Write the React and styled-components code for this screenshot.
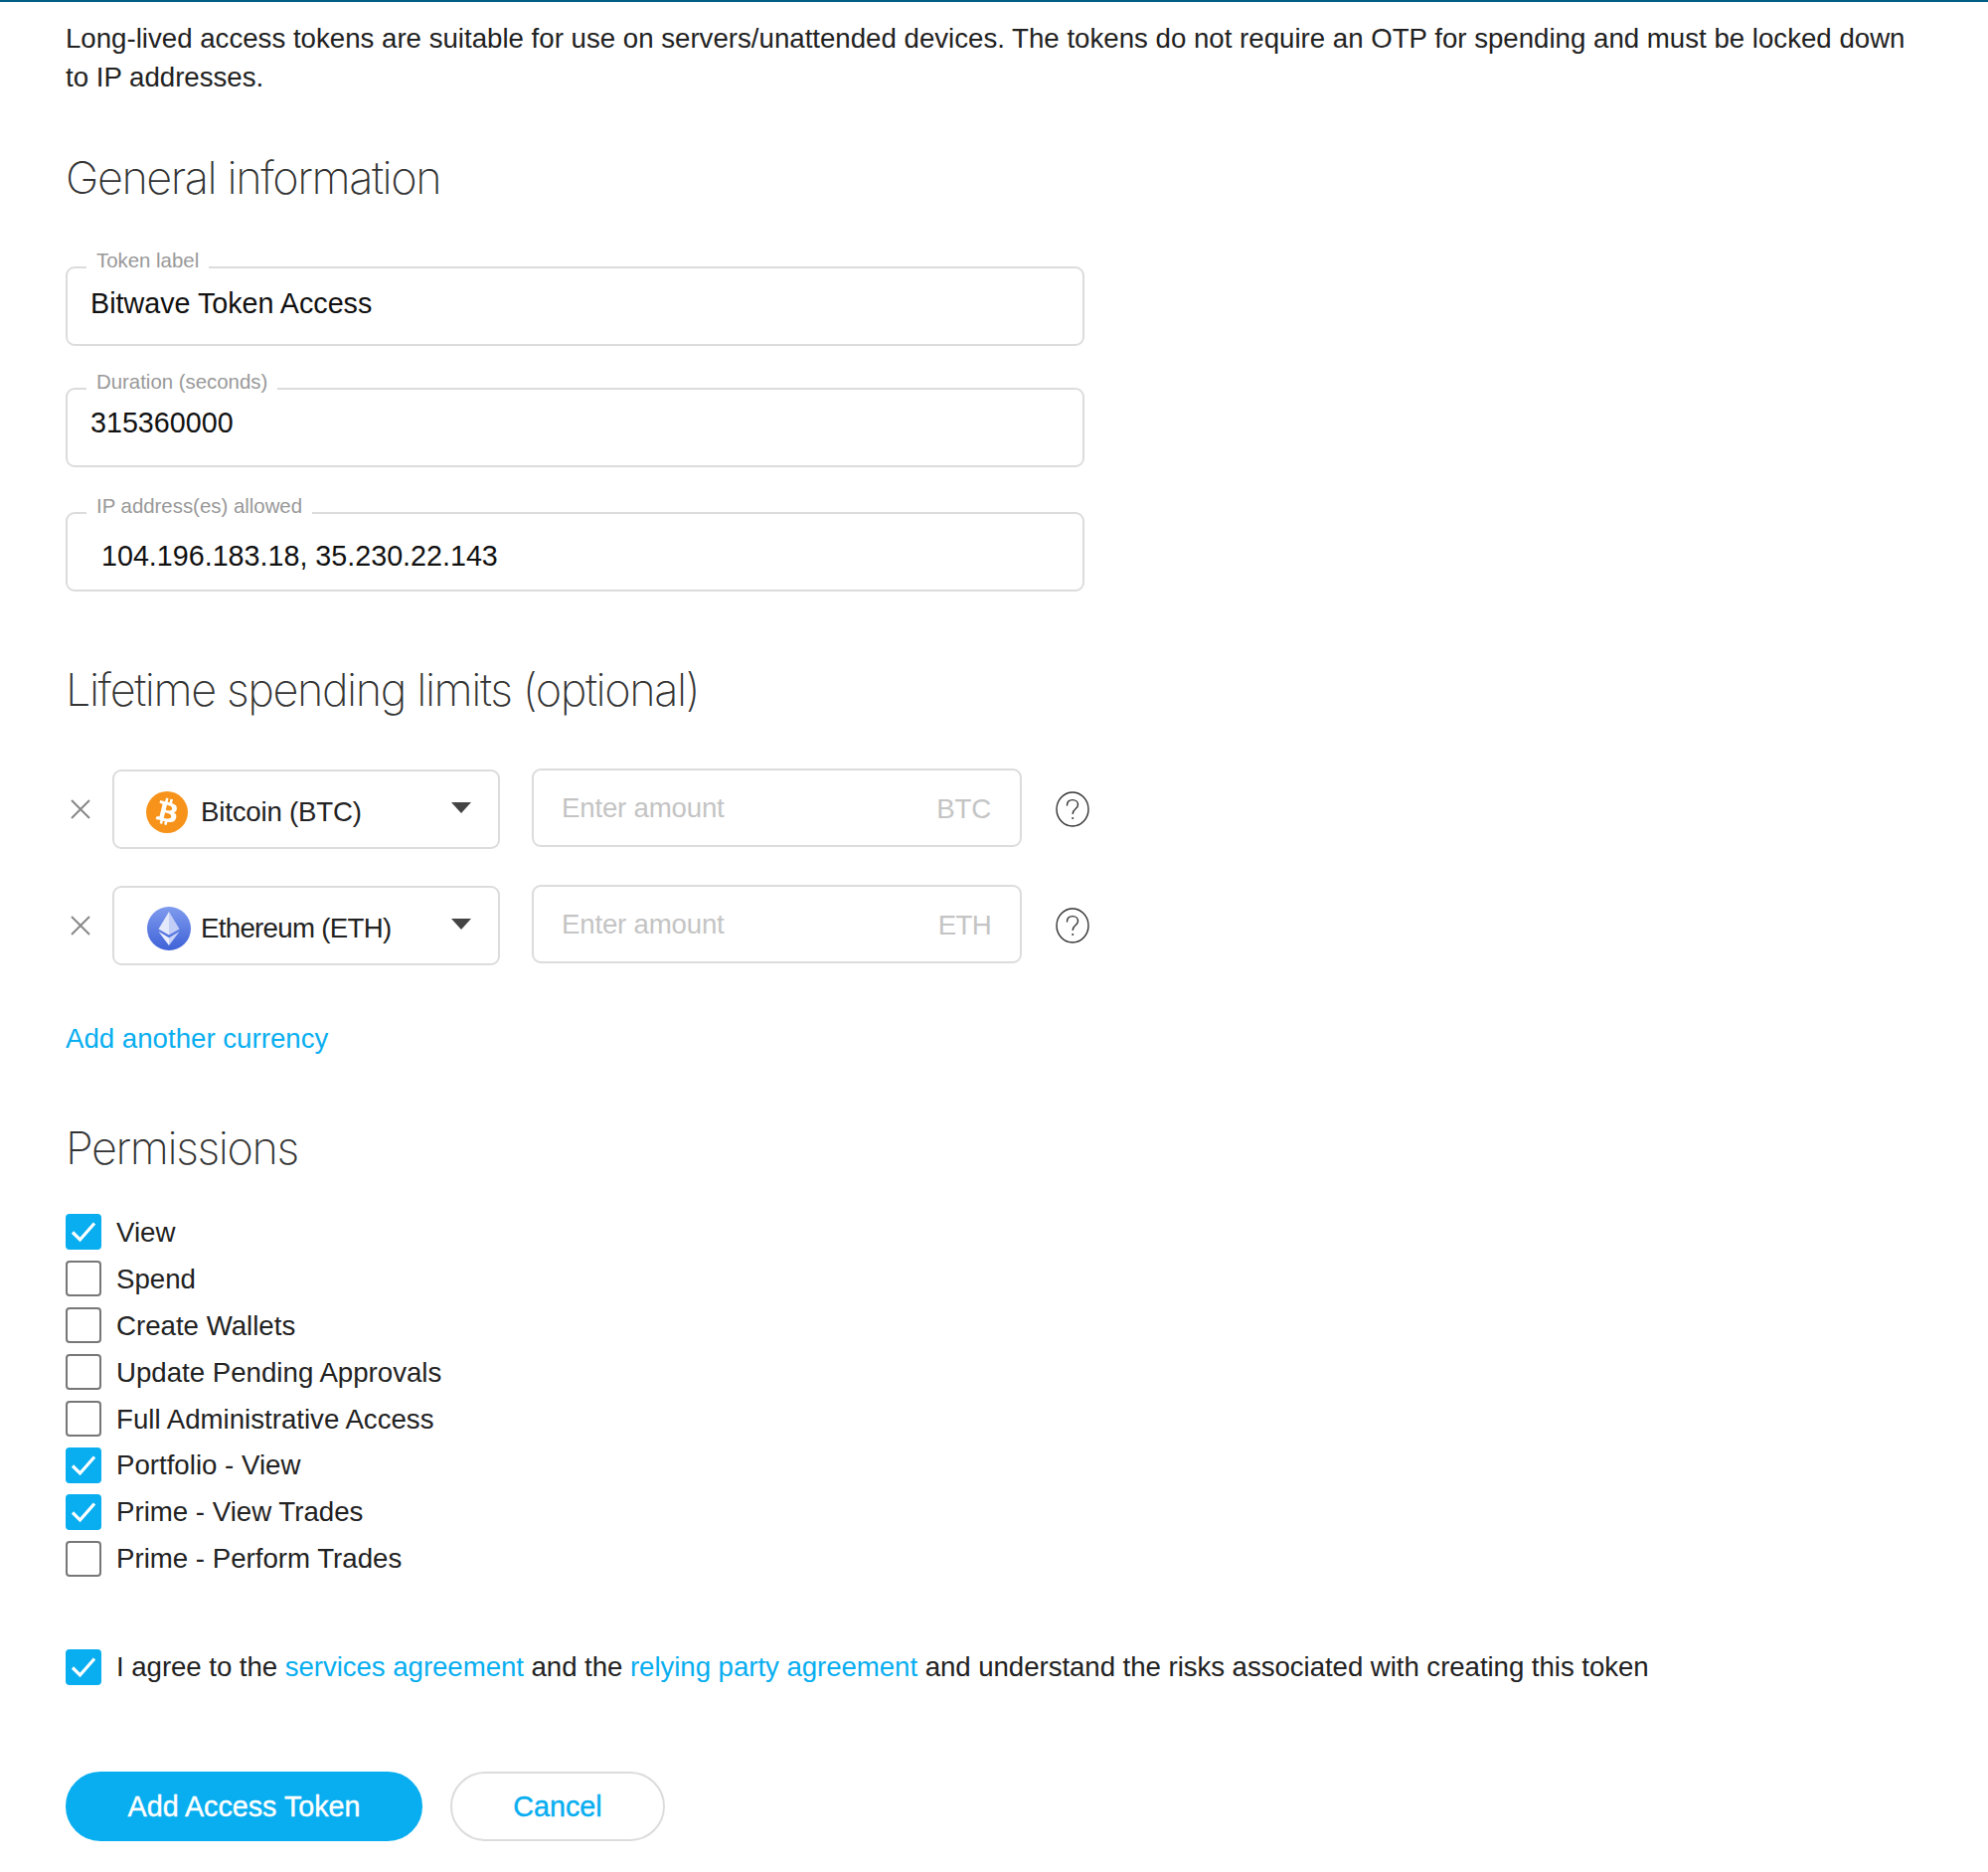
import React from 'react';
import styled, { createGlobalStyle } from 'styled-components';
import { FaBtc } from 'react-icons/fa';

const blue = '#08aef0';
const line = '#dcdcdc';

const GlobalStyle = createGlobalStyle`
  html, body {
    margin: 0;
    background: #fff;
  }
  body {
    font-family: "Liberation Sans", Arial, sans-serif;
    color: #222;
  }
`;

const TopBar = styled.div`
  height: 2px;
  background: #005f86;
`;

const Page = styled.main`
  padding: 17px 66px 32px;
  font-size: 27.65px;
  line-height: 39px;
`;

const Intro = styled.p`
  margin: 0;
`;

const Heading = styled.h2`
  margin: ${props => props.top}px 0 0;
  font-family: Inter, "Liberation Sans", sans-serif;
  font-weight: 200;
  font-size: 45px;
  line-height: 60px;
  letter-spacing: -1.42px;
  color: #333;
`;

const Fieldset = styled.fieldset`
  box-sizing: border-box;
  width: 1025px;
  height: 98px;
  margin: ${props => props.top}px 0 0;
  padding: 0;
  min-width: 0;
  border: 2px solid ${line};
  border-radius: 9px;
`;

const Legend = styled.legend`
  margin-left: 19px;
  padding: 0 10px 14px;
  font-size: 20.4px;
  line-height: 24px;
  color: #999;
`;

const FieldInput = styled.input`
  box-sizing: border-box;
  display: block;
  width: 100%;
  height: 36px;
  margin-top: ${props => props.offset}px;
  padding: 0 20px 0 ${props => props.padLeft}px;
  border: 0;
  outline: 0;
  background: transparent;
  font: inherit;
  font-size: 28.7px;
  color: #111;
`;

const LimitRows = styled.div`
  display: flex;
  flex-direction: column;
  gap: 38px;
  margin-top: 49px;
`;

const LimitRow = styled.div`
  display: flex;
  align-items: center;
  height: 79px;
`;

const Remove = styled.button`
  display: flex;
  width: 47px;
  margin-top: 2px;
  padding: 0 0 0 5px;
  border: 0;
  background: none;
  color: #888;
`;

const CurrencySelect = styled.button`
  box-sizing: border-box;
  display: flex;
  align-items: center;
  width: 390px;
  height: 80px;
  margin-top: 3px;
  padding: 5px 27px 0 32px;
  border: 2px solid ${line};
  border-radius: 9px;
  background: #fff;
  font: inherit;
  color: #222;
`;

const CurrencyName = styled.span`
  letter-spacing: ${props => props.spacing}px;
`;

const CoinBadge = styled.span`
  flex: none;
  display: flex;
  align-items: center;
  justify-content: center;
  width: 42px;
  height: 42px;
  margin-right: 13px;
  border-radius: 50%;
  background: #f7931a;
  color: #fff;
  font-size: 27px;

  svg {
    transform: rotate(14deg);
  }
`;

const Caret = styled.span`
  margin: 0 0 9px auto;
  border-top: 11px solid #444;
  border-left: 10px solid transparent;
  border-right: 10px solid transparent;
`;

const AmountBox = styled.label`
  box-sizing: border-box;
  display: flex;
  align-items: center;
  width: 493px;
  height: 79px;
  margin-left: 32px;
  padding: 0 29px 0 28px;
  border: 2px solid ${line};
  border-radius: 9px;
`;

const AmountInput = styled.input`
  flex: 1;
  min-width: 0;
  padding: 0;
  border: 0;
  outline: 0;
  font: inherit;
  letter-spacing: -0.2px;
  &::placeholder {
    color: #c4c4c4;
    opacity: 1;
  }
`;

const Unit = styled.span`
  padding-top: 2px;
  color: #c4c4c4;
  letter-spacing: ${props => props.spacing}px;
`;

const Help = styled.span`
  display: flex;
  margin: 2px 0 0 34px;
  color: #333;
`;

const TextLink = styled.a`
  color: ${blue};
  text-decoration: none;
`;

const AddCurrency = styled(TextLink)`
  display: block;
  margin-top: 56px;
`;

const PermissionList = styled.div`
  margin-top: 31px;
`;

const CheckRow = styled.label`
  display: flex;
  align-items: center;
  height: 46.9px;
  margin-top: ${props => props.top || 0}px;
`;

const Agreement = styled.span`
  letter-spacing: -0.057px;
`;

const Box = styled.span`
  box-sizing: border-box;
  flex: none;
  display: flex;
  align-items: center;
  justify-content: center;
  width: 36px;
  height: 36px;
  margin-right: 15px;
  border: 2px solid ${props => (props.checked ? blue : '#777')};
  border-radius: 4px;
  background: ${props => (props.checked ? blue : '#fff')};
`;

const Actions = styled.div`
  display: flex;
  gap: 28px;
  margin-top: 82px;
`;

const Button = styled.button`
  box-sizing: border-box;
  height: 70px;
  width: ${props => props.width}px;
  padding: 0;
  border: 2px solid ${props => (props.primary ? blue : line)};
  border-radius: 35px;
  background: ${props => (props.primary ? blue : '#fff')};
  color: ${props => (props.primary ? '#fff' : blue)};
  font: inherit;
  font-size: 28.7px;
  -webkit-text-stroke: 0.4px currentColor;
`;

const permissions = [
  ['View', true],
  ['Spend', false],
  ['Create Wallets', false],
  ['Update Pending Approvals', false],
  ['Full Administrative Access', false],
  ['Portfolio - View', true],
  ['Prime - View Trades', true],
  ['Prime - Perform Trades', false],
];

function CrossIcon() {
  return (
    <svg width="20" height="20" viewBox="0 0 20 20" fill="none" stroke="currentColor" strokeWidth="2">
      <path d="M1 1l18 18M19 1L1 19" />
    </svg>
  );
}

function HelpIcon() {
  return (
    <svg width="34" height="36" viewBox="0 0 34 36" fill="none" stroke="currentColor" strokeWidth="1.4">
      <ellipse cx="17" cy="18" rx="16" ry="17" />
      <path d="M11.5 14c0-3.4 2.4-5.4 5.6-5.4 3.200 0 5.400 2 5.400 4.800 0 4.400-5.300 4.200-5.300 9" strokeLinecap="round" />
      <circle cx="17.200" cy="27" r="1" fill="currentColor" stroke="none" />
    </svg>
  );
}

function EthIcon() {
  return (
    <svg width="46" height="46" viewBox="0 0 46 46" style={{ flex: 'none', marginRight: 9 }}>
      <defs>
        <linearGradient id="eth-bg" x1="0" y1="0" x2="0" y2="1">
          <stop offset="0" stopColor="#7f9bee" />
          <stop offset="1" stopColor="#3f62d8" />
        </linearGradient>
      </defs>
      <circle cx="23" cy="23" r="22" fill="url(#eth-bg)" />
      <path d="M23 6L12.500 23.500 23 29.500z" fill="#e3e8fb" />
      <path d="M23 6l10.500 17.500L23 29.500z" fill="#c3cef6" />
      <path d="M12.500 26L23 40V32.200z" fill="#eef1fd" />
      <path d="M33.500 26L23 40V32.200z" fill="#c9d3f7" />
    </svg>
  );
}

function CheckIcon() {
  return (
    <svg width="26" height="22" viewBox="0 0 26 22" fill="none" stroke="#fff" strokeWidth="3.200">
      <path d="M2 11.500l7.500 7.500L24 2.500" />
    </svg>
  );
}

function CheckBox({ checked }) {
  return <Box checked={checked}>{checked && <CheckIcon />}</Box>;
}

function Limit({ name, unit, icon, spacing }) {
  return (
    <LimitRow>
      <Remove aria-label="Remove"><CrossIcon /></Remove>
      <CurrencySelect>
        {icon}
        <CurrencyName spacing={spacing}>{name}</CurrencyName>
        <Caret />
      </CurrencySelect>
      <AmountBox>
        <AmountInput placeholder="Enter amount" />
        <Unit spacing={spacing}>{unit}</Unit>
      </AmountBox>
      <Help><HelpIcon /></Help>
    </LimitRow>
  );
}

export default function App() {
  return (
    <>
      <GlobalStyle />
      <TopBar />
      <Page>
        <Intro>
          Long-lived access tokens are suitable for use on servers/unattended devices. The tokens do not require an OTP
          for spending and must be locked down to IP addresses.
        </Intro>

        <Heading top={52}>General information</Heading>
        <Fieldset top={41}>
          <Legend>Token label</Legend>
          <FieldInput readOnly value="Bitwave Token Access" padLeft={23} offset={-1} />
        </Fieldset>
        <Fieldset top={24}>
          <Legend>Duration (seconds)</Legend>
          <FieldInput readOnly value="315360000" padLeft={23} offset={-3} />
        </Fieldset>
        <Fieldset top={26.500}>
          <Legend>IP address(es) allowed</Legend>
          <FieldInput readOnly value="104.196.183.18, 35.230.22.143" padLeft={34} offset={7} />
        </Fieldset>

        <Heading top={69.500}>Lifetime spending limits (optional)</Heading>
        <LimitRows>
          <Limit name="Bitcoin (BTC)" unit="BTC" spacing={-0.2} icon={<CoinBadge><FaBtc /></CoinBadge>} />
          <Limit name="Ethereum (ETH)" unit="ETH" spacing={-0.7} icon={<EthIcon />} />
        </LimitRows>
        <AddCurrency href="#">Add another currency</AddCurrency>

        <Heading top={61}>Permissions</Heading>
        <PermissionList>
          {permissions.map(([label, checked]) => (
            <CheckRow key={label}>
              <CheckBox checked={checked} />
              {label}
            </CheckRow>
          ))}
        </PermissionList>

        <CheckRow top={62}>
          <CheckBox checked />
          <Agreement>
            I agree to the <TextLink href="#">services agreement</TextLink> and the{' '}
            <TextLink href="#">relying party agreement</TextLink> and understand the risks associated with creating this
            token
          </Agreement>
        </CheckRow>

        <Actions>
          <Button primary width={359}>Add Access Token</Button>
          <Button width={216}>Cancel</Button>
        </Actions>
      </Page>
    </>
  );
}
